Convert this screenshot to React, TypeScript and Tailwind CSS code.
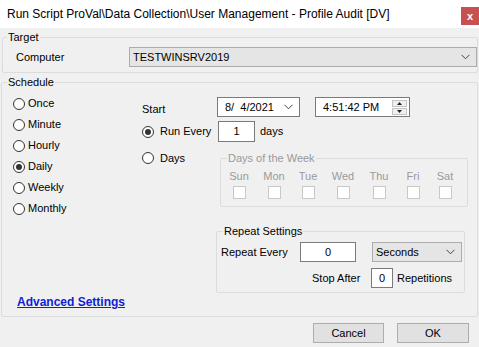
import React, { FC } from "react";

const Radio: FC<{ checked?: boolean }> = ({ checked }) => (
  <span className="w-[12px] h-[12px] shrink-0 rounded-full border border-[#333333] bg-white flex items-center justify-center">
    {checked && <span className="w-[6px] h-[6px] rounded-full bg-[#333333]" />}
  </span>
);

const Chevron: FC = () => (
  <svg width="9" height="6" viewBox="0 0 9 6" className="shrink-0">
    <polyline points="0.5,0.8 4.5,4.8 8.5,0.8" fill="none" stroke="#444" strokeWidth="1" />
  </svg>
);

const days = ["Sun", "Mon", "Tue", "Wed", "Thu", "Fri", "Sat"];
const periods = ["Once", "Minute", "Hourly", "Daily", "Weekly", "Monthly"];

export default function App() {
  return (
    <div
      className="w-[479px] h-[347px] bg-[#f0f0f0] text-[11px] text-black overflow-hidden"
      style={{ fontFamily: '"Liberation Sans", Arial, sans-serif' }}
    >
      {/* title bar */}
      <div className="h-[28px] bg-white flex items-start">
        <div className="pl-[7px] pt-[7px] leading-[15px] text-[12px] flex-1 whitespace-nowrap">
          Run Script ProVal\Data Collection\User Management - Profile Audit [DV]
        </div>
        <div className="mt-[7px] w-[18px] h-[18px] bg-[#c75050] text-white text-[11px] font-bold flex items-center justify-center leading-none">
          x
        </div>
      </div>

      {/* Target */}
      <fieldset className="mt-[1px] ml-[2px] w-[476px] border border-[#dcdcdc] rounded-[2px]">
        <legend className="ml-[4px] px-[1px] leading-[16px]">Target</legend>
        <div className="pt-[2px] pb-[5px] pl-[13px] flex items-center">
          <span className="w-[113px]">Computer</span>
          <div className="w-[348px] h-[20px] bg-[#e5e5e5] border border-[#acacac] flex items-center justify-between pl-[3px] pr-[6px]">
            <span>TESTWINSRV2019</span>
            <Chevron />
          </div>
        </div>
      </fieldset>

      {/* Schedule */}
      <fieldset className="mt-[1px] ml-[1px] w-[477px] border border-[#dcdcdc] rounded-[2px]">
        <legend className="ml-[5px] px-[1px] leading-[16px]">Schedule</legend>
        <div className="flex">
          <div className="w-[140px] pl-[11px] pt-[3px] flex flex-col">
            {periods.map((p) => (
              <div key={p} className="h-[21px] flex items-center gap-[3px]">
                <Radio checked={p === "Daily"} />
                <span>{p}</span>
              </div>
            ))}
          </div>

          <div className="flex flex-col pt-[7px]">
            <div className="flex items-center h-[20px]">
              <span className="w-[75px] pt-[5px]">Start</span>
              <div className="w-[83px] h-[20px] bg-white border border-[#7a7a7a] flex items-center justify-between pl-[7px] pr-[6px]">
                <span className="whitespace-pre">8/  4/2021</span>
                <Chevron />
              </div>
              <div className="ml-[15px] w-[95px] h-[20px] bg-white border border-[#7a7a7a] flex items-center justify-between pl-[7px] pr-[2px]">
                <span>4:51:42 PM</span>
                <div className="w-[15px] h-[15px] flex flex-col gap-[1px]">
                  <div className="flex-1 bg-[#f0f0f0] border border-[#c4c4c4] flex items-center justify-center">
                    <svg width="5" height="3" viewBox="0 0 5 3"><polygon points="2.5,0 5,3 0,3" fill="#222" /></svg>
                  </div>
                  <div className="flex-1 bg-[#f0f0f0] border border-[#c4c4c4] flex items-center justify-center">
                    <svg width="5" height="3" viewBox="0 0 5 3"><polygon points="0,0 5,0 2.5,3" fill="#222" /></svg>
                  </div>
                </div>
              </div>
            </div>

            <div className="mt-[4px] flex items-center h-[21px]">
              <div className="w-[76px] flex items-center gap-[6px]">
                <Radio checked />
                <span>Run Every</span>
              </div>
              <div className="w-[37px] h-[21px] bg-white border border-[#7a7a7a] flex items-center justify-center">1</div>
              <span className="ml-[5px]">days</span>
            </div>

            <div className="mt-[8px] flex items-start">
              <div className="w-[78px] h-[16px] flex items-center gap-[6px]">
                <Radio />
                <span>Days</span>
              </div>
              <fieldset className="w-[248px] border border-[#dcdcdc] rounded-[2px] text-[#9a9a9a]">
                <legend className="ml-[6px] px-[1px] leading-[16px]">Days of the Week</legend>
                <div className="pt-[2px] pb-[7px] grid grid-cols-[36px_34px_34px_36px_36px_32px_32px]">
                  {days.map((d) => (
                    <div key={d} className="flex flex-col items-center">
                      <span className="leading-[16px]">{d}</span>
                      <span className="mt-[2px] w-[13px] h-[13px] bg-white border border-[#c8c8c8]" />
                    </div>
                  ))}
                </div>
              </fieldset>
            </div>

            <fieldset className="mt-[16px] ml-[74px] w-[249px] border border-[#dcdcdc] rounded-[2px]">
              <legend className="ml-[6px] px-[1px] leading-[16px]">Repeat Settings</legend>
              <div className="pt-[3px] pl-[4px] flex items-center h-[23px]">
                <span className="w-[79px]">Repeat Every</span>
                <div className="w-[56px] h-[20px] bg-white border border-[#7a7a7a] flex items-center justify-center">0</div>
                <div className="ml-[16px] w-[90px] h-[20px] bg-[#e5e5e5] border border-[#acacac] flex items-center justify-between pl-[3px] pr-[6px]">
                  <span>Seconds</span>
                  <Chevron />
                </div>
              </div>
              <div className="mt-[6px] pb-[4px] pl-[95px] flex items-center">
                <span className="w-[59px]">Stop After</span>
                <div className="w-[22px] h-[20px] bg-white border border-[#7a7a7a] flex items-start justify-center pt-[1px]">0</div>
                <span className="ml-[4px]">Repetitions</span>
              </div>
            </fieldset>
          </div>
        </div>

        <div className="mt-[1px] pb-[6px] pl-[15px] leading-[16px]">
          <span className="font-bold underline text-[12px] text-[#1021d4]">Advanced Settings</span>
        </div>
      </fieldset>

      {/* buttons */}
      <div className="mt-[6px] pr-[10px] flex justify-end gap-[13px]">
        <div className="w-[71px] h-[20px] bg-[#e1e1e1] border border-[#adadad] flex items-center justify-center">Cancel</div>
        <div className="w-[72px] h-[20px] bg-[#e1e1e1] border border-[#adadad] flex items-center justify-center">OK</div>
      </div>
    </div>
  );
}
